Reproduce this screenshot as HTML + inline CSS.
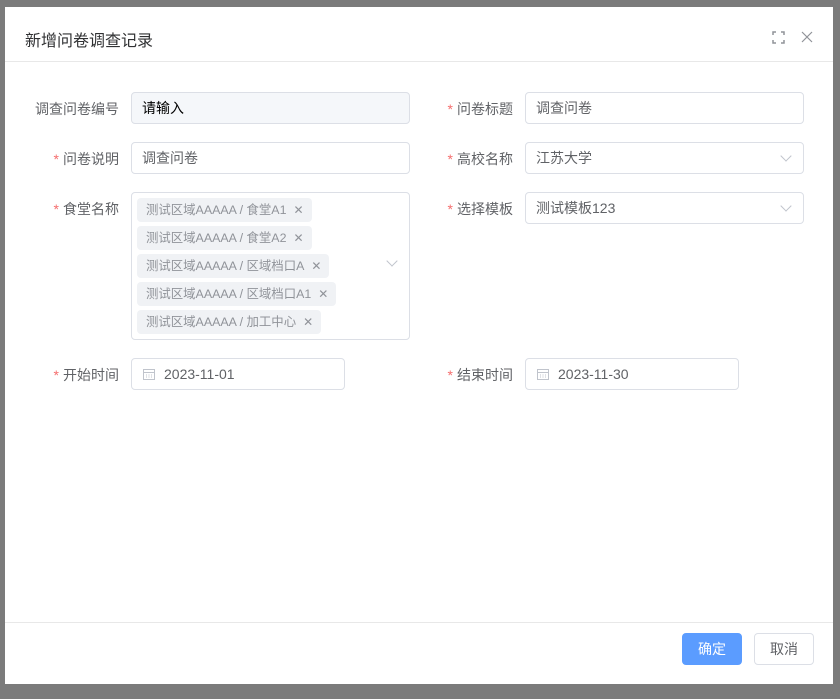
<!DOCTYPE html>
<html><head><meta charset="utf-8"><style>
*{box-sizing:border-box;margin:0;padding:0}
body{width:840px;height:699px;background:#7b7b7b;font-family:"Liberation Sans","Noto Sans CJK SC",sans-serif;position:relative;overflow:hidden}
.dlg{position:absolute;left:5px;top:7px;width:828px;height:677px;background:#fff}
.title{position:absolute;left:20px;top:20px;font-size:16px;color:#303133}
.hdr{position:absolute;left:0;right:0;top:54px;border-top:1px solid #e8e8e8}
.ftr{position:absolute;left:0;right:0;top:615px;border-top:1px solid #e8e8e8}
.lbl{position:absolute;font-size:14px;color:#606266;text-align:right;width:109px}
.lbl b{color:#f56c6c;font-weight:normal;margin-right:4px}
.in{position:absolute;height:32px;border:1px solid #dcdfe6;border-radius:4px;font-size:14px;color:#606266;padding-left:10px;line-height:31px}
.arr{position:absolute;right:13px;top:9px;width:8px;height:8px;border-right:1px solid #c0c4cc;border-bottom:1px solid #c0c4cc;transform:rotate(45deg)}
.tag{position:absolute;left:5px;height:24px;background:#f0f2f5;border-radius:4px;font-size:12.4px;color:#909399;line-height:24px;padding:0 8px 0 9px;white-space:nowrap}
.tag i{font-style:normal;margin-left:7px;font-size:12px}
.btn{position:absolute;top:626px;height:32px;width:60px;border-radius:4px;font-size:14px;text-align:center;line-height:30px}
</style></head><body>
<div class="dlg">
<div class="title">新增问卷调查记录</div>
<svg style="position:absolute;left:767px;top:24px" width="13" height="13" viewBox="0 0 13 13" fill="none" stroke="#909399" stroke-width="1.5"><path d="M1 4V1h3M9 1h3v3M12 9v3H9M4 12H1V9"/></svg>
<svg style="position:absolute;left:796px;top:24px" width="12" height="12" viewBox="0 0 12 12" stroke="#909399" stroke-width="1.2"><path d="M1 1l10 10M11 1L1 11"/></svg>
<div class="hdr"></div>

<div class="lbl" style="left:5px;top:92px">调查问卷编号</div>
<div class="in" style="left:126px;top:85px;width:279px;background:#f5f7fa;color:#000">请输入</div>
<div class="lbl" style="left:399px;top:92px"><b>*</b>问卷标题</div>
<div class="in" style="left:520px;top:85px;width:279px">调查问卷</div>

<div class="lbl" style="left:5px;top:142px"><b>*</b>问卷说明</div>
<div class="in" style="left:126px;top:135px;width:279px">调查问卷</div>
<div class="lbl" style="left:399px;top:142px"><b>*</b>高校名称</div>
<div class="in" style="left:520px;top:135px;width:279px">江苏大学<span class="arr"></span></div>

<div class="lbl" style="left:5px;top:192px"><b>*</b>食堂名称</div>
<div class="in" style="left:126px;top:185px;width:279px;height:148px">
<div class="tag" style="top:5px">测试区域AAAAA / 食堂A1<i>✕</i></div>
<div class="tag" style="top:33px">测试区域AAAAA / 食堂A2<i>✕</i></div>
<div class="tag" style="top:61px">测试区域AAAAA / 区域档口A<i>✕</i></div>
<div class="tag" style="top:89px">测试区域AAAAA / 区域档口A1<i>✕</i></div>
<div class="tag" style="top:117px">测试区域AAAAA / 加工中心<i>✕</i></div>
<span class="arr" style="top:64px"></span></div>
<div class="lbl" style="left:399px;top:192px"><b>*</b>选择模板</div>
<div class="in" style="left:520px;top:185px;width:279px">测试模板123<span class="arr"></span></div>

<div class="lbl" style="left:5px;top:358px"><b>*</b>开始时间</div>
<div class="in" style="left:126px;top:351px;width:214px;padding-left:32px">2023-11-01
<svg style="position:absolute;left:11px;top:9px" width="12" height="12" viewBox="0 0 12 12" fill="none" stroke="#c0c4cc"><rect x=".5" y="1.5" width="11" height="10"/><path d="M.5 4.5h11M3 7h1M5.5 7h1M8 7h1M3 9h1M5.5 9h1M8 9h1"/></svg></div>
<div class="lbl" style="left:399px;top:358px"><b>*</b>结束时间</div>
<div class="in" style="left:520px;top:351px;width:214px;padding-left:32px">2023-11-30
<svg style="position:absolute;left:11px;top:9px" width="12" height="12" viewBox="0 0 12 12" fill="none" stroke="#c0c4cc"><rect x=".5" y="1.5" width="11" height="10"/><path d="M.5 4.5h11M3 7h1M5.5 7h1M8 7h1M3 9h1M5.5 9h1M8 9h1"/></svg></div>

<div class="ftr"></div>
<div class="btn" style="left:677px;background:#5b9cff;color:#fff;border:1px solid #5b9cff">确定</div>
<div class="btn" style="left:749px;border:1px solid #dcdfe6;color:#606266">取消</div>
</div>
</body></html>
